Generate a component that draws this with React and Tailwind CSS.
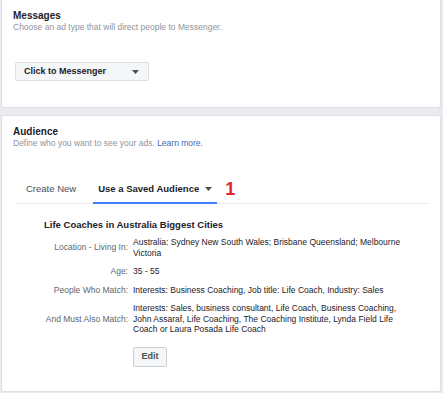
import React from "react";

const Caret = ({ className = "" }) => (
  <svg width="7" height="4" viewBox="0 0 7 4" className={className}>
    <path d="M0 0 L7 0 L3.5 4 Z" fill="#4b4f56" />
  </svg>
);

const Row = ({ label, children }) => (
  <div className="flex items-center">
    <div className="w-[84px] shrink-0 text-right whitespace-nowrap text-[#606770]">{label}</div>
    <div className="ml-[5px] w-[268px] text-[#1d2129]">{children}</div>
  </div>
);

export default function App() {
  return (
    <div
      className="w-[443px] h-[393px] bg-[#e9ebee] px-[1px] flex flex-col overflow-hidden"
      style={{ fontFamily: '"Liberation Sans", Arial, sans-serif' }}
    >
      {/* Messages card */}
      <div className="h-[108px] w-[440px] bg-white border border-t-0 border-[#dddfe2] rounded-b-[3px] pl-[11px] pt-[10px] flex flex-col">
        <div className="text-[10px] leading-[12px] font-bold text-[#1d2129]">Messages</div>
        <div className="text-[8.5px] leading-[10px] text-[#90949c]">
          Choose an ad type that will direct people to Messenger.
        </div>
        <div className="mt-[30px] ml-[2px] w-[134px] h-[19px] bg-[#f5f6f7] border border-[#dddfe2] rounded-[2px] flex items-center pl-[8px] pr-[9px] justify-between">
          <span className="text-[9px] font-bold text-[#1d2129]">Click to Messenger</span>
          <Caret />
        </div>
      </div>

      {/* Audience card */}
      <div className="mt-[7px] h-[277px] w-[440px] bg-white border border-[#dddfe2] rounded-[3px] pl-[11px] pt-[10px] flex flex-col">
        <div className="text-[10px] leading-[12px] font-bold text-[#1d2129]">Audience</div>
        <div className="text-[8.5px] leading-[10px] text-[#90949c]">
          Define who you want to see your ads. <span className="text-[#4267b2]">Learn more.</span>
        </div>

        {/* Tabs */}
        <div className="mt-[27px] ml-[2px] mr-[12px] border-b border-[#e9ebee] flex items-end h-[29px]">
          <div className="h-full flex items-center pl-[11px] pr-[17px] text-[9.5px] text-[#4b4f56]">
            Create New
          </div>
          <div className="h-full flex items-center pl-[5px] pr-[5px] border-b-[2px] border-[#4080ff] -mb-[1px] text-[9.5px] font-bold text-[#1d2129]">
            Use a Saved Audience
            <Caret className="ml-[6px]" />
          </div>
          <div className="h-full flex items-center ml-[8px] pb-[1px] text-[18px] leading-[18px] font-bold text-[#e3262b]">
            1
          </div>
        </div>

        {/* Saved audience */}
        <div className="ml-[31px] mt-[15px] flex flex-col text-[8.5px] leading-[10.5px]">
          <div className="text-[9.5px] leading-[12px] font-bold text-[#1d2129]">
            Life Coaches in Australia Biggest Cities
          </div>
          <div className="mt-[6px] flex flex-col gap-[8px]">
            <Row label="Location - Living In:">
              Australia: Sydney New South Wales; Brisbane Queensland; Melbourne Victoria
            </Row>
            <Row label="Age:">35 - 55</Row>
            <Row label="People Who Match:">
              Interests: Business Coaching, Job title: Life Coach, Industry: Sales
            </Row>
            <Row label="And Must Also Match:">
              Interests: Sales, business consultant, Life Coach, Business Coaching, John Assaraf, Life Coaching, The Coaching Institute, Lynda Field Life Coach or Laura Posada Life Coach
            </Row>
          </div>
          <div className="mt-[12px] ml-[89px] w-[34px] h-[20px] bg-[#f5f6f7] border border-[#ccd0d5] rounded-[2px] flex items-center justify-center text-[9px] font-bold text-[#4b4f56]">
            Edit
          </div>
        </div>
      </div>
    </div>
  );
}
